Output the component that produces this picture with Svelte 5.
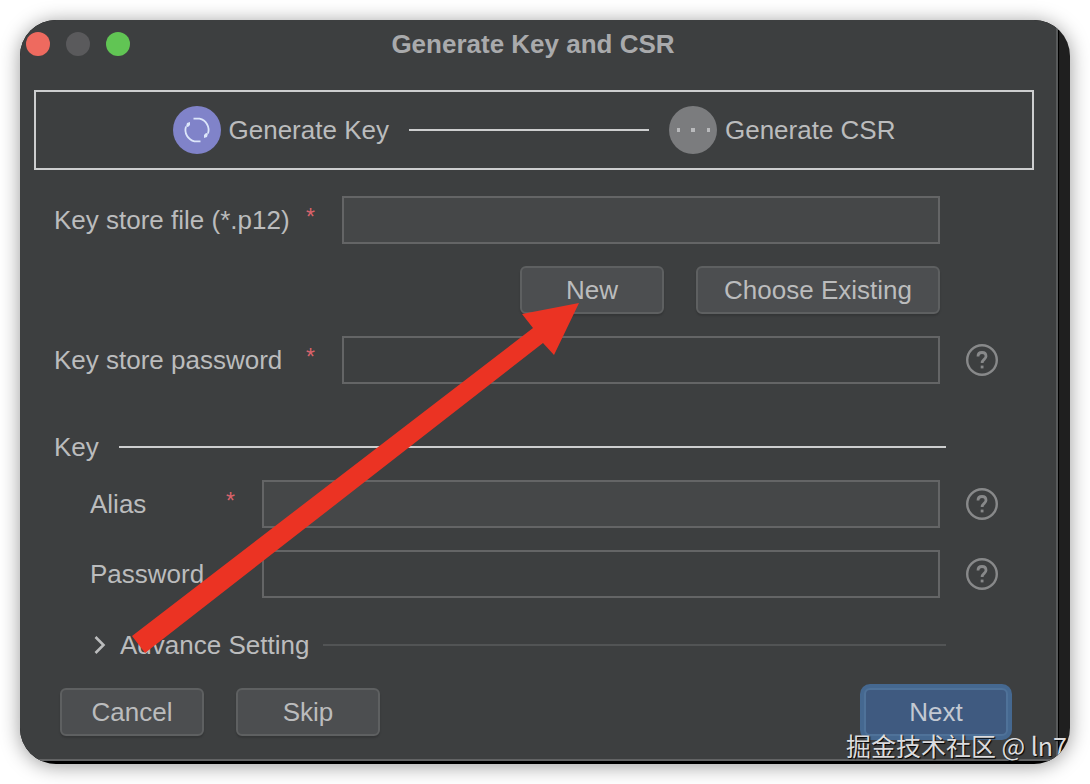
<script>
	let storeFile = '';
	let storePassword = '';
	let alias = '';
	let keyPassword = '';
</script>

{#snippet help(topic)}
	<button class='help' type='button' aria-label='Help: {topic}'>
		<svg viewBox='0 0 32 32' width='32' height='32' fill='none' stroke='currentColor'>
			<circle cx='16' cy='16' r='14.8' stroke-width='2.4' />
			<path d='M12 12.5c0-2.4 1.6-4 4-4s4 1.6 4 3.8c0 3-3.9 3.2-3.9 6.7' stroke-width='2.8' />
			<path d='M14.7 23h2.8' stroke-width='2.8' />
		</svg>
	</button>
{/snippet}

<div class='page'>
	<div class='shell'>
		<main class='dialog'>
			<header>
				<div class='lights'>
					<button class='light red' type='button' aria-label='Close'></button>
					<button class='light grey' type='button' aria-label='Minimize'></button>
					<button class='light green' type='button' aria-label='Zoom'></button>
				</div>
				<h1>Generate Key and CSR</h1>
			</header>

			<div class='steps'>
				<div class='step'>
					<svg viewBox='0 0 48 48' width='48' height='48'>
						<circle cx='24' cy='24' r='24' fill='#8083c9' />
						<g fill='none' stroke='#dce6fa' stroke-width='1.8'>
							<path d='M20.500 12.700h6A11.500 11.500 0 0 1 35 27.500' />
							<path d='M27.500 35.300h-6A11.500 11.500 0 0 1 13 20.500' />
						</g>
						<path d='M13 20.500l1-3.500 3-1v3l-2 2zM35 27.500l-1 3.500-3 1v-3l2-2z' fill='#dce6fa' />
					</svg>
					<span>Generate Key</span>
				</div>
				<div class='step-line'></div>
				<div class='step'>
					<svg viewBox='0 0 48 48' width='48' height='48'>
						<circle cx='24' cy='24' r='24' fill='#7b7c7e' />
						<path d='M8 22h3v4H8zM22 22h4v4h-4zM38 22h3v4h-3z' fill='#b9babc' />
					</svg>
					<span>Generate CSR</span>
				</div>
			</div>

			<form>
				<div class='row'>
					<label for='store-file'>Key store file (*.p12) <span class='star'>*</span></label>
					<input id='store-file' class='lit' type='text' bind:value={storeFile}>
				</div>
				<div class='row'>
					<div class='pick'>
						<button class='btn' type='button'>New</button>
						<button class='btn wide' type='button'>Choose Existing</button>
					</div>
				</div>
				<div class='row'>
					<label for='store-password'>Key store password <span class='star'>*</span></label>
					<input id='store-password' type='password' bind:value={storePassword}>
					{@render help('key store password')}
				</div>

				<div class='divider'>
					<h2>Key</h2>
					<div class='rule'></div>
				</div>

				<div class='row nested'>
					<label for='alias'>Alias <span class='star'>*</span></label>
					<input id='alias' class='lit' type='text' bind:value={alias}>
					{@render help('alias')}
				</div>
				<div class='row nested'>
					<label for='key-password'>Password <span class='star'>*</span></label>
					<input id='key-password' type='password' bind:value={keyPassword}>
					{@render help('password')}
				</div>

				<div class='divider advance'>
					<button class='toggle' type='button' aria-expanded='false'>
						<svg viewBox='0 0 12 20' width='12' height='20' fill='none' stroke='currentColor' stroke-width='2.6'>
							<path d='M1.500 2l8 8-8 8' />
						</svg>
						Advance Setting
					</button>
					<div class='rule dim'></div>
				</div>
			</form>

			<footer>
				<button class='btn' type='button'>Cancel</button>
				<button class='btn' type='button'>Skip</button>
				<button class='btn next' type='button'>Next</button>
			</footer>
		</main>

		<!-- annotation pointing at New -->
		<svg class='arrow' viewBox='0 0 448 350' width='448' height='350'>
			<path d='M0 333L401 25 390 11 447 0 422 52 411 40 13 350z' fill='#eb3323' />
		</svg>
		<span class='watermark'>掘金技术社区 @ ln7</span>
	</div>
</div>

<style>
:global(body) {
	margin: 0;
	background: #fff;
}

.page {
	padding: 20px;
	font-family: 'Liberation Sans', Arial, sans-serif;
	font-size: 26px;
	color: #bbbcbd;
}

.shell {
	position: relative;
	overflow: hidden;
	padding: 0 12px 3px 0;
	border-radius: 36px;
	background: linear-gradient(#1f1f1f, #1f1f1f) right / 11px 100% no-repeat, #000;
	box-shadow: 0 2px 20px rgba(0, 0, 0, 0.4);
}

.dialog {
	border-right: 2px solid #585a5b;
	border-bottom: 2px solid #626364;
	background: #3d3f40;
}

header {
	display: grid;
	grid-template-columns: 112px 1fr 128px;
	height: 70px;
	box-sizing: border-box;
	padding: 12px 0 0 6px;
	align-items: start;
}

.lights {
	display: flex;
	gap: 16px;
}

.light {
	width: 24px;
	height: 24px;
	padding: 0;
	border: 0;
	border-radius: 50%;
}

.red {
	background: #ee6a5f;
}

.grey {
	background: #5a5a5c;
}

.green {
	background: #61c554;
}

h1 {
	margin: 0;
	font-size: 26px;
	line-height: 24px;
	text-align: center;
	color: #a9aaac;
}

.steps {
	display: flex;
	align-items: center;
	justify-content: center;
	gap: 20px;
	height: 76px;
	margin: 0 22px 0 14px;
	border: 2px solid #cdcecf;
}

.step {
	display: flex;
	align-items: center;
	gap: 8px;
}

.step-line {
	width: 240px;
	height: 2px;
	background: #cdcecf;
}

form {
	display: flex;
	flex-direction: column;
	gap: 22px;
	padding: 26px 58px 0 34px;
}

.row {
	display: grid;
	grid-template-columns: 288px 1fr 58px;
	align-items: center;
	height: 48px;
}

.nested {
	grid-template-columns: 172px 1fr 58px;
	margin-left: 36px;
}

label {
	display: flex;
	justify-content: space-between;
	padding-right: 27px;
	line-height: 30px;
	white-space: nowrap;
}

.star {
	font-size: 23px;
	line-height: 24px;
	color: #d9636b;
}

input {
	width: 100%;
	height: 48px;
	box-sizing: border-box;
	padding: 0 12px;
	border: 2px solid #646566;
	border-radius: 0;
	background: #3d3f40;
	color: inherit;
	font: inherit;
	outline: none;
}

input.lit {
	background: #454748;
}

.help {
	justify-self: end;
	width: 32px;
	height: 32px;
	padding: 0;
	border: 0;
	background: none;
	color: #88898a;
}

.help svg {
	display: block;
}

.pick {
	grid-column: 2;
	display: flex;
	justify-content: flex-end;
	gap: 32px;
}

.btn {
	width: 144px;
	height: 48px;
	padding: 0;
	border: 2px solid #5e6061;
	border-radius: 6px;
	background: #4c4e50;
	box-shadow: 0 2px 2px rgba(0, 0, 0, 0.15);
	color: inherit;
	font: inherit;
}

.wide {
	width: 244px;
}

.next {
	margin-left: auto;
	border-color: #4f7299;
	background: #3f5a80;
	box-shadow: 0 0 0 4px #456890;
	color: #c3c9d2;
}

.divider {
	display: flex;
	align-items: center;
	gap: 20px;
	height: 30px;
	margin: 26px 52px -4px 0;
}

h2 {
	margin: 0;
	font-size: 26px;
	font-weight: 400;
}

.rule {
	flex: 1;
	height: 2px;
	background: #cdcecf;
}

.advance {
	gap: 14px;
	margin: 10px 52px 0 40px;
}

.dim {
	background: #525455;
}

.toggle {
	display: flex;
	align-items: center;
	gap: 14px;
	padding: 0;
	border: 0;
	background: none;
	color: inherit;
	font: inherit;
}

footer {
	display: flex;
	gap: 32px;
	padding: 28px 48px 23px 40px;
}

.arrow {
	position: absolute;
	left: 112px;
	top: 283px;
	pointer-events: none;
}

.watermark {
	position: absolute;
	right: 3px;
	bottom: 2px;
	font-family: 'Noto Sans CJK SC', sans-serif;
	font-size: 25px;
	line-height: 34px;
	color: #dcdcde;
	text-shadow: 1px 1px 1px #000;
	white-space: nowrap;
}
</style>
